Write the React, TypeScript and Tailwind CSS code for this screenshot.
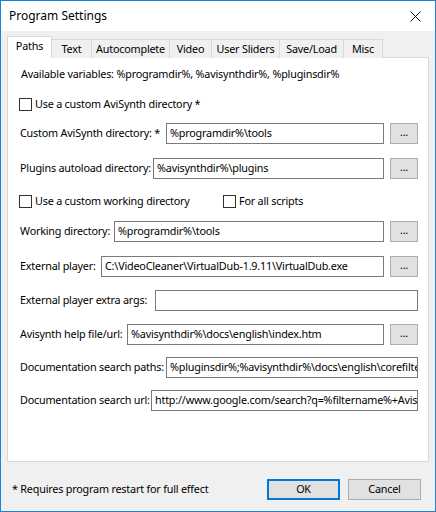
import React from "react";

const FONT = { fontFamily: '"Noto Sans", "Open Sans", Arial, sans-serif' };

const tabs = ["Paths", "Text", "Autocomplete", "Video", "User Sliders", "Save/Load", "Misc"];
const tabWidths = ["w-[45px]", "w-[40px]", "w-[78px]", "w-[42px]", "w-[68px]", "w-[64px]", "w-[39px]"];

function Checkbox({ label }: { label: string }) {
  return (
    <div className="flex items-center gap-[3px]">
      <span className="w-[13px] h-[13px] border border-[#333] bg-white" />
      <span>{label}</span>
    </div>
  );
}

function Browse() {
  return (
    <div className="ml-[6px] shrink-0 w-[28px] h-[21px] border border-[#adadad] bg-[#e1e1e1] flex items-center justify-center pb-[3px]">
      ...
    </div>
  );
}

// labelW fixes where the text box starts, as in the original dialog
function Row({
  label,
  value,
  labelW,
  browse = true,
  className = "",
}: {
  label: string;
  value: string;
  labelW: string;
  browse?: boolean;
  className?: string;
}) {
  return (
    <div className={`flex items-center h-[21px] shrink-0 pr-[10px] ${className}`}>
      <span className={`${labelW} shrink-0 whitespace-nowrap overflow-hidden pl-px`}>{label}</span>
      <div className="flex-1 min-w-0 h-[21px] border border-[#7a7a7a] bg-white px-[3px] flex items-center overflow-hidden whitespace-nowrap">
        {value}
      </div>
      {browse && <Browse />}
    </div>
  );
}

export default function App() {
  return (
    <div
      className="w-[436px] h-[512px] border border-[#1883d7] bg-[#f0f0f0] flex flex-col text-[10.8px] tracking-[-0.2px] text-black overflow-hidden"
      style={FONT}
    >
      {/* title bar */}
      <div className="h-[30px] shrink-0 bg-white flex items-center justify-between pl-[8px] pr-[10px]">
        <span className="text-[12px] tracking-normal">Program Settings</span>
        <svg width="11" height="11" viewBox="0 0 11 11" className="mr-[4px]">
          <path d="M0.5 0.5 L10.5 10.5 M10.5 0.5 L0.5 10.5" stroke="#111" strokeWidth="1" />
        </svg>
      </div>

      {/* tabs */}
      <div className="px-[6px] pt-[5px] flex-1 flex flex-col">
        <div className="flex items-end h-[22px] shrink-0 relative z-10">
          {tabs.map((t, i) =>
            i === 0 ? (
              <div
                key={t}
                className={`${tabWidths[i]} h-[22px] bg-white border border-[#d9d9d9] border-b-0 flex items-center justify-center pb-[2px]`}
              >
                {t}
              </div>
            ) : (
              <div
                key={t}
                className={`${tabWidths[i]} h-[19px] bg-[#f0f0f0] border border-[#d9d9d9] border-l-0 border-b-0 flex items-center justify-center`}
              >
                {t}
              </div>
            )
          )}
        </div>
        <div className="w-[422px] h-[405px] shrink-0 -mt-px bg-white border border-[#d9d9d9] pl-[11px] flex flex-col">
          <div className="mt-[6px] h-[21px] flex items-center pl-[2px]">
            Available variables: %programdir%, %avisynthdir%, %pluginsdir%
          </div>
          <div className="mt-[9px] h-[21px] flex items-center">
            <Checkbox label="Use a custom AviSynth directory *" />
          </div>
          <Row className="mt-[8px]" labelW="w-[147px]" label="Custom AviSynth directory: *" value="%programdir%\tools" />
          <Row className="mt-[14px]" labelW="w-[134px]" label="Plugins autoload directory:" value="%avisynthdir%\plugins" />
          <div className="mt-[12px] h-[21px] flex items-center">
            <div className="w-[204px]">
              <Checkbox label="Use a custom working directory" />
            </div>
            <Checkbox label="For all scripts" />
          </div>
          <Row className="mt-[9px]" labelW="w-[95px]" label="Working directory:" value="%programdir%\tools" />
          <Row
            className="mt-[14px]"
            labelW="w-[82px]"
            label="External player:"
            value="C:\VideoCleaner\VirtualDub-1.9.11\VirtualDub.exe"
          />
          <Row
            className="mt-[13px]"
            labelW="w-[136px]"
            label="External player extra args:"
            value=""
            browse={false}
          />
          <Row
            className="mt-[13px]"
            labelW="w-[108px]"
            label="Avisynth help file/url:"
            value="%avisynthdir%\docs\english\index.htm"
          />
          <Row
            className="mt-[12px]"
            labelW="w-[147px]"
            label="Documentation search paths:"
            value="%pluginsdir%;%avisynthdir%\docs\english\corefilters"
            browse={false}
          />
          <Row
            className="mt-[12px]"
            labelW="w-[132px]"
            label="Documentation search url:"
            value="http://www.google.com/search?q=%filtername%+Avisynth"
            browse={false}
          />
        </div>

        {/* footer */}
        <div className="flex items-start pt-[17px] h-[49px] shrink-0 pl-[5px] pr-[8px]">
          <span className="flex-1 h-[21px] flex items-center">* Requires program restart for full effect</span>
          <button className="w-[73px] h-[21px] border-2 border-[#0078d7] bg-[#e1e1e1] flex items-center justify-center">
            OK
          </button>
          <button className="ml-[8px] w-[73px] h-[21px] border border-[#adadad] bg-[#e1e1e1] flex items-center justify-center">
            Cancel
          </button>
        </div>
      </div>
    </div>
  );
}
